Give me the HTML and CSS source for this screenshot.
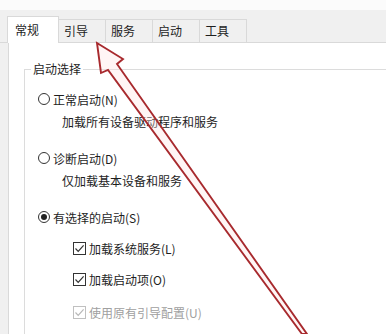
FILE: index.html
```html
<!DOCTYPE html>
<html lang="zh-CN">
<head>
    <meta charset="UTF-8">
    <meta name="viewport" content="width=device-width, initial-scale=1.0">
    <title>系统配置</title>
    <link rel="stylesheet" href="styles.css">
</head>
<body>
    <div class="top"></div>
    <div class="tabs">
        <div class="tab active">常规</div>
        <div class="tab">引导</div>
        <div class="tab">服务</div>
        <div class="tab">启动</div>
        <div class="tab">工具</div>
    </div>
    <div class="panel">
        <fieldset class="group">
            <legend>启动选择</legend>
            <div class="option first"><span class="radio"></span>正常启动(N)</div>
            <div class="desc">加载所有设备驱动程序和服务</div>
            <div class="option"><span class="radio"></span>诊断启动(D)</div>
            <div class="desc">仅加载基本设备和服务</div>
            <div class="option"><span class="radio on"></span>有选择的启动(S)</div>
            <div class="check">
                <span class="box"><svg viewBox="0 0 11 11"><polyline points="1.5,5.5 4.2,8.3 9.6,2.4"/></svg></span>加载系统服务(L)
            </div>
            <div class="check">
                <span class="box"><svg viewBox="0 0 11 11"><polyline points="1.5,5.5 4.2,8.3 9.6,2.4"/></svg></span>加载启动项(O)
            </div>
            <div class="check last disabled">
                <span class="box"><svg viewBox="0 0 11 11"><polyline points="1.5,5.5 4.2,8.3 9.6,2.4"/></svg></span>使用原有引导配置(U)
            </div>
        </fieldset>
    </div>
    <svg class="arrow" width="386" height="334" viewBox="0 0 386 334">
        <polygon points="97,43 123,59 117,64 307,334 302,334 108,70 101,73"/>
    </svg>
</body>
</html>
```

FILE: styles.css
```css
* {
    margin: 0;
    padding: 0;
    box-sizing: border-box;
}
html, body {
    width: 386px;
    height: 334px;
    overflow: hidden;
}
body {
    position: relative;
    background-color: #f0f0f0;
    font-family: "Noto Sans CJK SC", "Liberation Sans", sans-serif;
    font-size: 12px;
    color: #1e1e1e;
}
.top {
    height: 10px;
    background-color: #fbfbfb;
}
.tabs {
    display: flex;
    align-items: flex-end;
    height: 33px;
    padding-left: 7px;
    border-bottom: 1px solid #d9d9d9;
}
.tab {
    width: 47px;
    height: 23px;
    line-height: 22px;
    padding-left: 5px;
    background-color: #f0f0f0;
    border: 1px solid #d9d9d9;
    border-left: none;
    border-bottom: none;
}
.tab.active {
    position: relative;
    width: 52px;
    height: 27px;
    line-height: 26px;
    padding-left: 7px;
    margin-bottom: -1px;
    background-color: #fff;
    border-left: 1px solid #d9d9d9;
}
.panel {
    height: 291px;
    margin-left: 8px;
    padding: 18px 0 0 15px;
    background-color: #fff;
    border-left: 1px solid #d9d9d9;
}
.group {
    height: 273px;
    border: 1px solid #dcdcdc;
    border-right: none;
    border-bottom: none;
}
.group legend {
    margin-left: 6px;
    padding: 0 2px;
    line-height: 16px;
}
.option {
    display: flex;
    align-items: center;
    height: 20px;
    margin-top: 16px;
    padding-left: 13px;
}
.option.first {
    margin-top: 12px;
}
.desc {
    height: 20px;
    line-height: 20px;
    margin-top: 3px;
    padding-left: 37px;
}
.radio {
    display: flex;
    align-items: center;
    justify-content: center;
    width: 12px;
    height: 12px;
    margin-right: 3px;
    border: 1px solid #333;
    border-radius: 50%;
}
.radio.on::after {
    content: "";
    width: 6px;
    height: 6px;
    border-radius: 50%;
    background-color: #222;
}
.check {
    display: flex;
    align-items: center;
    height: 20px;
    margin-top: 11px;
    padding-left: 48px;
}
.check.last {
    margin-top: 13px;
}
.box {
    display: flex;
    width: 13px;
    height: 13px;
    margin-right: 3px;
    border: 1px solid #333;
}
.box svg {
    width: 11px;
    height: 11px;
    fill: none;
    stroke: #333;
    stroke-width: 1.2;
}
.disabled {
    color: #a0a0a0;
}
.disabled .box {
    border-color: #c0c0c0;
}
.disabled .box svg {
    stroke: #b8b8b8;
}
.arrow {
    position: absolute;
    top: 0;
    left: 0;
    pointer-events: none;
}
.arrow polygon {
    fill: rgba(255, 225, 225, 0.35);
    stroke: #a82a2e;
    stroke-width: 1.9;
    stroke-linejoin: miter;
}
```
